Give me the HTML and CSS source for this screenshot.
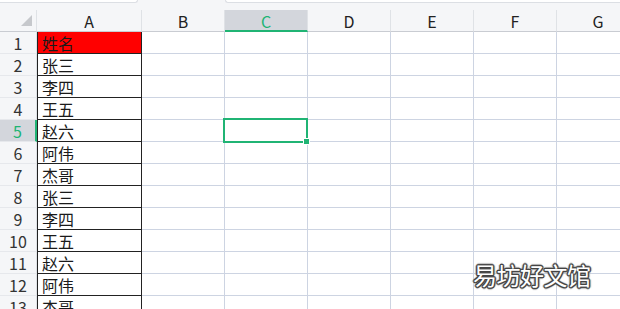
FILE: index.html
```html
<!DOCTYPE html>
<html lang="zh-CN">
<head>
  <meta charset="UTF-8">
  <title>表格</title>
  <link rel="stylesheet" href="styles.css">
</head>
<body>

<div class="sheet">
  <div class="toolbar">
    <div class="box name-box"></div>
    <div class="box formula-box"></div>
  </div>

  <div class="row head">
    <div class="rh corner"><span class="tri"></span></div>
    <div class="ch col-a">A</div>
    <div class="ch">B</div>
    <div class="ch active">C</div>
    <div class="ch">D</div>
    <div class="ch">E</div>
    <div class="ch">F</div>
    <div class="ch">G</div>
  </div>

  <div class="row"><div class="rh">1</div><div class="a red">姓名</div><div class="c"></div><div class="c"></div><div class="c"></div><div class="c"></div><div class="c"></div><div class="c"></div></div>
  <div class="row"><div class="rh">2</div><div class="a">张三</div><div class="c"></div><div class="c"></div><div class="c"></div><div class="c"></div><div class="c"></div><div class="c"></div></div>
  <div class="row"><div class="rh">3</div><div class="a">李四</div><div class="c"></div><div class="c"></div><div class="c"></div><div class="c"></div><div class="c"></div><div class="c"></div></div>
  <div class="row"><div class="rh">4</div><div class="a">王五</div><div class="c"></div><div class="c"></div><div class="c"></div><div class="c"></div><div class="c"></div><div class="c"></div></div>
  <div class="row"><div class="rh active">5</div><div class="a">赵六</div><div class="c"></div><div class="c sel"><span class="handle"></span></div><div class="c"></div><div class="c"></div><div class="c"></div><div class="c"></div></div>
  <div class="row"><div class="rh">6</div><div class="a">阿伟</div><div class="c"></div><div class="c"></div><div class="c"></div><div class="c"></div><div class="c"></div><div class="c"></div></div>
  <div class="row"><div class="rh">7</div><div class="a">杰哥</div><div class="c"></div><div class="c"></div><div class="c"></div><div class="c"></div><div class="c"></div><div class="c"></div></div>
  <div class="row"><div class="rh">8</div><div class="a">张三</div><div class="c"></div><div class="c"></div><div class="c"></div><div class="c"></div><div class="c"></div><div class="c"></div></div>
  <div class="row"><div class="rh">9</div><div class="a">李四</div><div class="c"></div><div class="c"></div><div class="c"></div><div class="c"></div><div class="c"></div><div class="c"></div></div>
  <div class="row"><div class="rh">10</div><div class="a">王五</div><div class="c"></div><div class="c"></div><div class="c"></div><div class="c"></div><div class="c"></div><div class="c"></div></div>
  <div class="row"><div class="rh">11</div><div class="a">赵六</div><div class="c"></div><div class="c"></div><div class="c"></div><div class="c"></div><div class="c"></div><div class="c"></div></div>
  <div class="row"><div class="rh">12</div><div class="a">阿伟</div><div class="c"></div><div class="c"></div><div class="c"></div><div class="c"></div><div class="c"></div><div class="c"></div></div>
  <div class="row"><div class="rh">13</div><div class="a">杰哥</div><div class="c"></div><div class="c"></div><div class="c"></div><div class="c"></div><div class="c"></div><div class="c"></div></div>

  <div class="watermark">易坊好文馆</div>
</div>

</body>
</html>
```

FILE: styles.css
```css
body {
  margin: 0;
  background: #fff;
  font-family: "Noto Sans CJK SC", "Noto Sans", sans-serif;
  overflow: hidden;
}

.sheet {
  position: relative;
  width: 620px;
  height: 309px;
  overflow: hidden;
}

.toolbar {
  height: 10px;
  background: #f5f6f8;
  display: flex;
}

.box {
  height: 2px;
  background: #fff;
  border: 1px solid #dcdfe4;
  border-top: none;
}

.name-box {
  width: 137px;
  border-left: none;
  border-radius: 0 0 4px 0;
}

.formula-box {
  margin-left: 87px;
  flex: 1;
  border-right: none;
  border-radius: 0 0 0 4px;
}

.row {
  display: flex;
  height: 22px;
  flex-shrink: 0;
}

.row.head {
  height: 22px;
  background: #f5f6f8;
}

.rh {
  width: 37px;
  flex-shrink: 0;
  box-sizing: border-box;
  background: #f5f6f8;
  border-right: 1px solid #dfe2e6;
  border-bottom: 1px solid #e6e8ec;
  color: #333;
  font-size: 16px;
  line-height: 23px;
  text-align: center;
}

.rh.active {
  background: #d3d6dc;
  color: #20b474;
  border-right: 2px solid #20b474;
}

.corner {
  position: relative;
  border-bottom: 1px solid #c9ccd2;
}

.tri {
  position: absolute;
  right: 4px;
  bottom: 5px;
  width: 0;
  height: 0;
  border-left: 11px solid transparent;
  border-bottom: 11px solid #c6c8cc;
}

.ch {
  width: 83px;
  flex-shrink: 0;
  box-sizing: border-box;
  border-right: 1px solid #dfe2e6;
  border-bottom: 1px solid #c9ccd2;
  color: #222;
  font-size: 16px;
  line-height: 22px;
  text-align: center;
}

.ch.col-a {
  width: 105px;
}

.ch.active {
  background: #d3d6dc;
  color: #20b474;
  border-bottom: 2px solid #20b474;
}

.a {
  width: 105px;
  flex-shrink: 0;
  box-sizing: border-box;
  border-left: 1px solid #222;
  border-right: 1px solid #222;
  border-bottom: 1px solid #222;
  padding-left: 4px;
  color: #1a1a1a;
  font-size: 16px;
  line-height: 23px;
}

.a.red {
  background: #ff0000;
}

.c {
  width: 83px;
  flex-shrink: 0;
  box-sizing: border-box;
  border-right: 1px solid #cdd4e2;
  border-bottom: 1px solid #cdd4e2;
}

.sel {
  position: relative;
}

.sel::after {
  content: "";
  position: absolute;
  left: -2px;
  top: -2px;
  right: -1px;
  bottom: -2px;
  border: 2px solid #20b474;
}

.handle {
  position: absolute;
  right: -3px;
  bottom: -4px;
  width: 5px;
  height: 5px;
  background: #20b474;
  border: 1px solid #fff;
  z-index: 1;
}

.watermark {
  position: absolute;
  left: 473px;
  top: 260px;
  font-size: 24px;
  line-height: 30px;
  color: #fff;
  letter-spacing: -0.5px;
  text-shadow:
    1px 0 0 #444, -1px 0 0 #444, 0 1px 0 #444, 0 -1px 0 #444,
    1px 1px 0 #444, -1px -1px 0 #444, 1px -1px 0 #444, -1px 1px 0 #444,
    2px 0 1px #999, -2px 0 1px #999, 0 2px 1px #999, 0 -2px 1px #999;
}
```
